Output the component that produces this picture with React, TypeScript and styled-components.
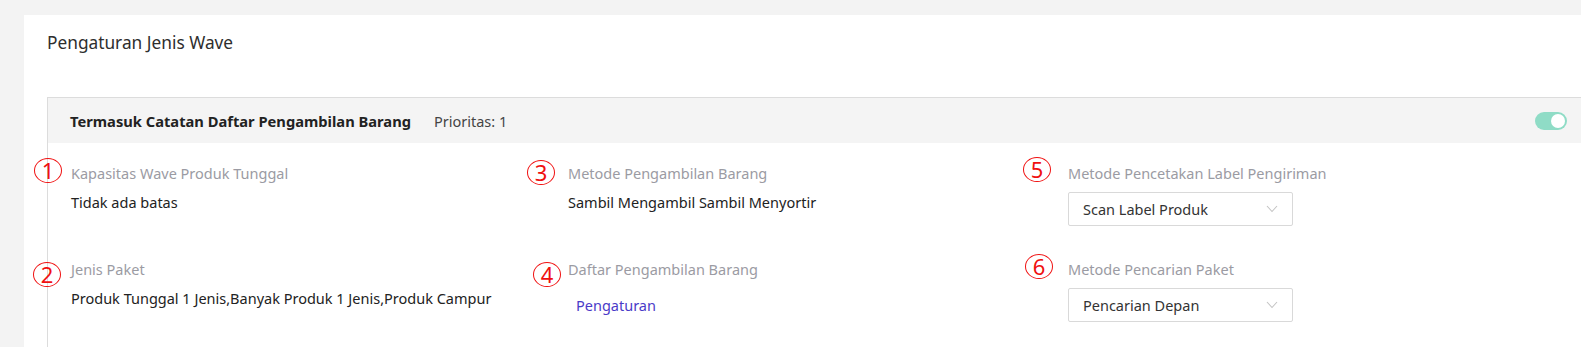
import React from "react";
import styled, { createGlobalStyle } from "styled-components";

const GlobalStyle = createGlobalStyle`
  html, body {
    margin: 0;
    padding: 0;
    background: #f3f3f3;
    overflow: hidden;
    font-family: "Noto Sans", "Open Sans", sans-serif;
  }
  * { box-sizing: border-box; }
`;

const Page = styled.div`
  padding: 15px 0 0 24px;
  width: 1581px;
  height: 347px;
`;

const Card = styled.div`
  background: #ffffff;
  width: 1600px;
  height: 340px;
  padding: 16px 0 0 23px;
`;

const Title = styled.div`
  font-size: 17.3px;
  line-height: 24px;
  color: #2e2e2e;
  margin-bottom: 42px;
`;

const Panel = styled.div`
  width: 1536px;
  border: 1px solid #dcdcdc;
  border-bottom: none;
  height: 260px;
`;

const PanelHeader = styled.div`
  height: 45px;
  background: #f4f4f4;
  display: flex;
  align-items: center;
  padding: 0 15px 0 22px;
`;

const HeaderTitle = styled.span`
  font-size: 14.7px;
  font-weight: 700;
  color: #222222;
  margin-right: 23px;
`;

const Priority = styled.span`
  font-size: 14.5px;
  color: #444444;
`;

const Switch = styled.span`
  margin-left: auto;
  width: 32px;
  height: 18px;
  border-radius: 9px;
  background: #8fdcc6;
  display: flex;
  align-items: center;
  justify-content: flex-end;
  padding: 0 2px;
  &::after {
    content: "";
    width: 14px;
    height: 14px;
    border-radius: 50%;
    background: #ffffff;
  }
`;

const PanelBody = styled.div`
  padding: 20px 0 0 23px;
  display: grid;
  grid-template-columns: 497px 500px 1fr;
  row-gap: 33px;
`;

const Field = styled.div`
  position: relative;
  display: flex;
  flex-direction: column;
  align-items: flex-start;
`;

const Label = styled.div`
  font-size: 14.5px;
  line-height: 20px;
  color: #9b9ba3;
  margin-bottom: 9px;
  white-space: nowrap;
`;

const Value = styled.div`
  font-size: 14.5px;
  line-height: 20px;
  color: #222222;
  white-space: nowrap;
`;

const LinkButton = styled.a`
  display: inline-flex;
  align-items: center;
  height: 34px;
  padding: 0 8px;
  font-size: 14.5px;
  color: #4a3bc8;
  cursor: pointer;
  text-decoration: none;
`;

const SelectBox = styled.div`
  width: 225px;
  height: 34px;
  border: 1px solid #d9d9d9;
  border-radius: 2px;
  display: flex;
  align-items: center;
  justify-content: space-between;
  padding: 0 14px 0 14px;
  font-size: 14.5px;
  color: #333333;
  background: #fff;
`;

const Marker = styled.span<{ $x: number; $y: number }>`
  position: absolute;
  left: ${(p) => p.$x}px;
  top: ${(p) => p.$y}px;
  width: 28px;
  height: 25px;
  border: 1.9px solid #f01010;
  border-radius: 50%;
  color: #f01010;
  font-size: 22px;
  line-height: 1;
  display: flex;
  align-items: center;
  justify-content: center;
  font-family: "Noto Sans", sans-serif;
  padding-bottom: 1px;
`;

const Chevron = () => (
  <svg width="12" height="8" viewBox="0 0 12 8" fill="none">
    <polyline points="1,1 6,6.5 11,1" stroke="#c4c4c4" strokeWidth="1.1" />
  </svg>
);

const Select = ({ value }: { value: string }) => (
  <SelectBox>
    <span>{value}</span>
    <Chevron />
  </SelectBox>
);

export default function App() {
  return (
    <>
      <GlobalStyle />
      <Page>
        <Card>
          <Title>Pengaturan Jenis Wave</Title>
          <Panel>
            <PanelHeader>
              <HeaderTitle>Termasuk Catatan Daftar Pengambilan Barang</HeaderTitle>
              <Priority>Prioritas: 1</Priority>
              <Switch />
            </PanelHeader>
            <PanelBody>
              <Field>
                <Marker $x={-37} $y={-5}>1</Marker>
                <Label>Kapasitas Wave Produk Tunggal</Label>
                <Value>Tidak ada batas</Value>
              </Field>
              <Field>
                <Marker $x={-41} $y={-3}>3</Marker>
                <Label>Metode Pengambilan Barang</Label>
                <Value>Sambil Mengambil Sambil Menyortir</Value>
              </Field>
              <Field>
                <Marker $x={-45} $y={-6}>5</Marker>
                <Label>Metode Pencetakan Label Pengiriman</Label>
                <Select value="Scan Label Produk" />
              </Field>
              <Field>
                <Marker $x={-38} $y={3}>2</Marker>
                <Label>Jenis Paket</Label>
                <Value>Produk Tunggal 1 Jenis,Banyak Produk 1 Jenis,Produk Campur</Value>
              </Field>
              <Field>
                <Marker $x={-35} $y={3}>4</Marker>
                <Label>Daftar Pengambilan Barang</Label>
                <LinkButton>Pengaturan</LinkButton>
              </Field>
              <Field>
                <Marker $x={-43} $y={-5}>6</Marker>
                <Label>Metode Pencarian Paket</Label>
                <Select value="Pencarian Depan" />
              </Field>
            </PanelBody>
          </Panel>
        </Card>
      </Page>
    </>
  );
}
